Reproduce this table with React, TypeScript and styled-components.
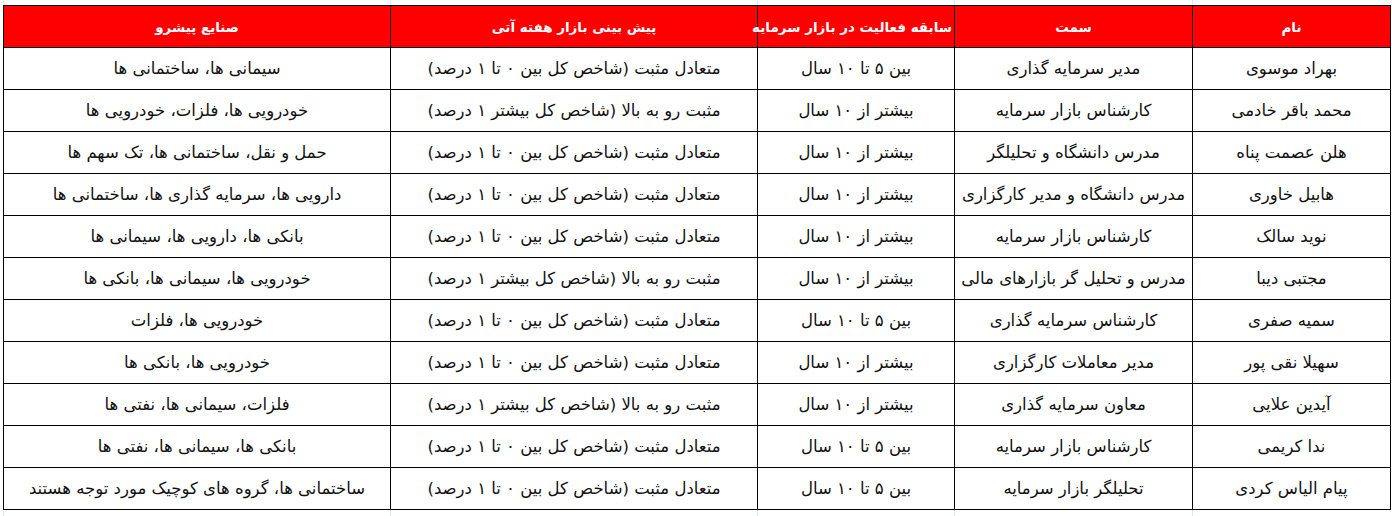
import React from 'react';
import styled, { createGlobalStyle } from 'styled-components';

const GlobalStyle = createGlobalStyle`
  html, body {
    margin: 0;
    padding: 0;
    background: #ffffff;
  }
  body {
    font-family: "DejaVu Sans", "Liberation Sans", sans-serif;
  }
`;

const COLS = [198, 238, 197, 367, 387];

const Sheet = styled.div`
  display: flex;
  flex-direction: column;
  padding-left: 3px;
  width: 1387px;
`;

const GridStrip = styled.div<{ $h: number }>`
  display: flex;
  flex-direction: row-reverse;
  height: ${p => p.$h}px;
`;

const GridCell = styled.div<{ $w: number }>`
  flex: 0 0 ${p => p.$w}px;
  box-sizing: border-box;
  border-left: 1px solid #e1e6ec;
`;

const Table = styled.table`
  direction: rtl;
  border-collapse: collapse;
  table-layout: fixed;
  width: 1387px;
`;

const HeadCell = styled.th`
  background: #ff0000;
  color: #ffffff;
  font-weight: bold;
  font-size: 13.5px;
  height: 41px;
  padding: 0 2px;
  border: 1px solid #000000;
  text-align: center;
  vertical-align: middle;
  white-space: nowrap;
`;

const Cell = styled.td`
  color: #111111;
  font-size: 16.5px;
  height: 41px;
  padding: 0 4px;
  border: 1px solid #000000;
  text-align: center;
  vertical-align: middle;
  white-space: nowrap;
`;

const headers = ['نام', 'سمت', 'سابقه فعالیت در بازار سرمایه', 'پیش بینی بازار هفته آتی', 'صنایع پیشرو'];

const MID = 'متعادل مثبت (شاخص کل بین ۰ تا ۱ درصد)';
const UP = 'مثبت رو به بالا (شاخص کل بیشتر ۱ درصد)';
const Y5 = 'بین ۵ تا ۱۰ سال';
const Y10 = 'بیشتر از ۱۰ سال';

const rows: string[][] = [
  ['بهراد موسوی', 'مدیر سرمایه گذاری', Y5, MID, 'سیمانی ها، ساختمانی ها'],
  ['محمد باقر خادمی', 'کارشناس بازار سرمایه', Y10, UP, 'خودرویی ها، فلزات، خودرویی ها'],
  ['هلن عصمت پناه', 'مدرس دانشگاه و تحلیلگر', Y10, MID, 'حمل و نقل، ساختمانی ها، تک سهم ها'],
  ['هابیل خاوری', 'مدرس دانشگاه و مدیر کارگزاری', Y10, MID, 'دارویی ها، سرمایه گذاری ها، ساختمانی ها'],
  ['نوید سالک', 'کارشناس بازار سرمایه', Y10, MID, 'بانکی ها، دارویی ها، سیمانی ها'],
  ['مجتبی دیبا', 'مدرس و تحلیل گر بازارهای مالی', Y10, UP, 'خودرویی ها، سیمانی ها، بانکی ها'],
  ['سمیه صفری', 'کارشناس سرمایه گذاری', Y5, MID, 'خودرویی ها، فلزات'],
  ['سهیلا نقی پور', 'مدیر معاملات کارگزاری', Y10, MID, 'خودرویی ها، بانکی ها'],
  ['آیدین علایی', 'معاون سرمایه گذاری', Y10, UP, 'فلزات، سیمانی ها، نفتی ها'],
  ['ندا کریمی', 'کارشناس بازار سرمایه', Y5, MID, 'بانکی ها، سیمانی ها، نفتی ها'],
  ['پیام الیاس کردی', 'تحلیلگر بازار سرمایه', Y5, MID, 'ساختمانی ها، گروه های کوچیک مورد توجه هستند'],
];

function Strip({ h }: { h: number }) {
  return (
    <GridStrip $h={h}>
      {COLS.map((w, i) => <GridCell key={i} $w={w} />)}
    </GridStrip>
  );
}

export default function App() {
  return (
    <>
      <GlobalStyle />
      <Sheet>
        <Strip h={5} />
        <Table>
          <colgroup>
            {COLS.map((w, i) => <col key={i} style={{ width: w }} />)}
          </colgroup>
          <thead>
            <tr>
              {headers.map(h => <HeadCell key={h}>{h}</HeadCell>)}
            </tr>
          </thead>
          <tbody>
            {rows.map((r, ri) => (
              <tr key={ri}>
                {r.map((c, ci) => <Cell key={ci}>{c}</Cell>)}
              </tr>
            ))}
          </tbody>
        </Table>
        <Strip h={8} />
      </Sheet>
    </>
  );
}
